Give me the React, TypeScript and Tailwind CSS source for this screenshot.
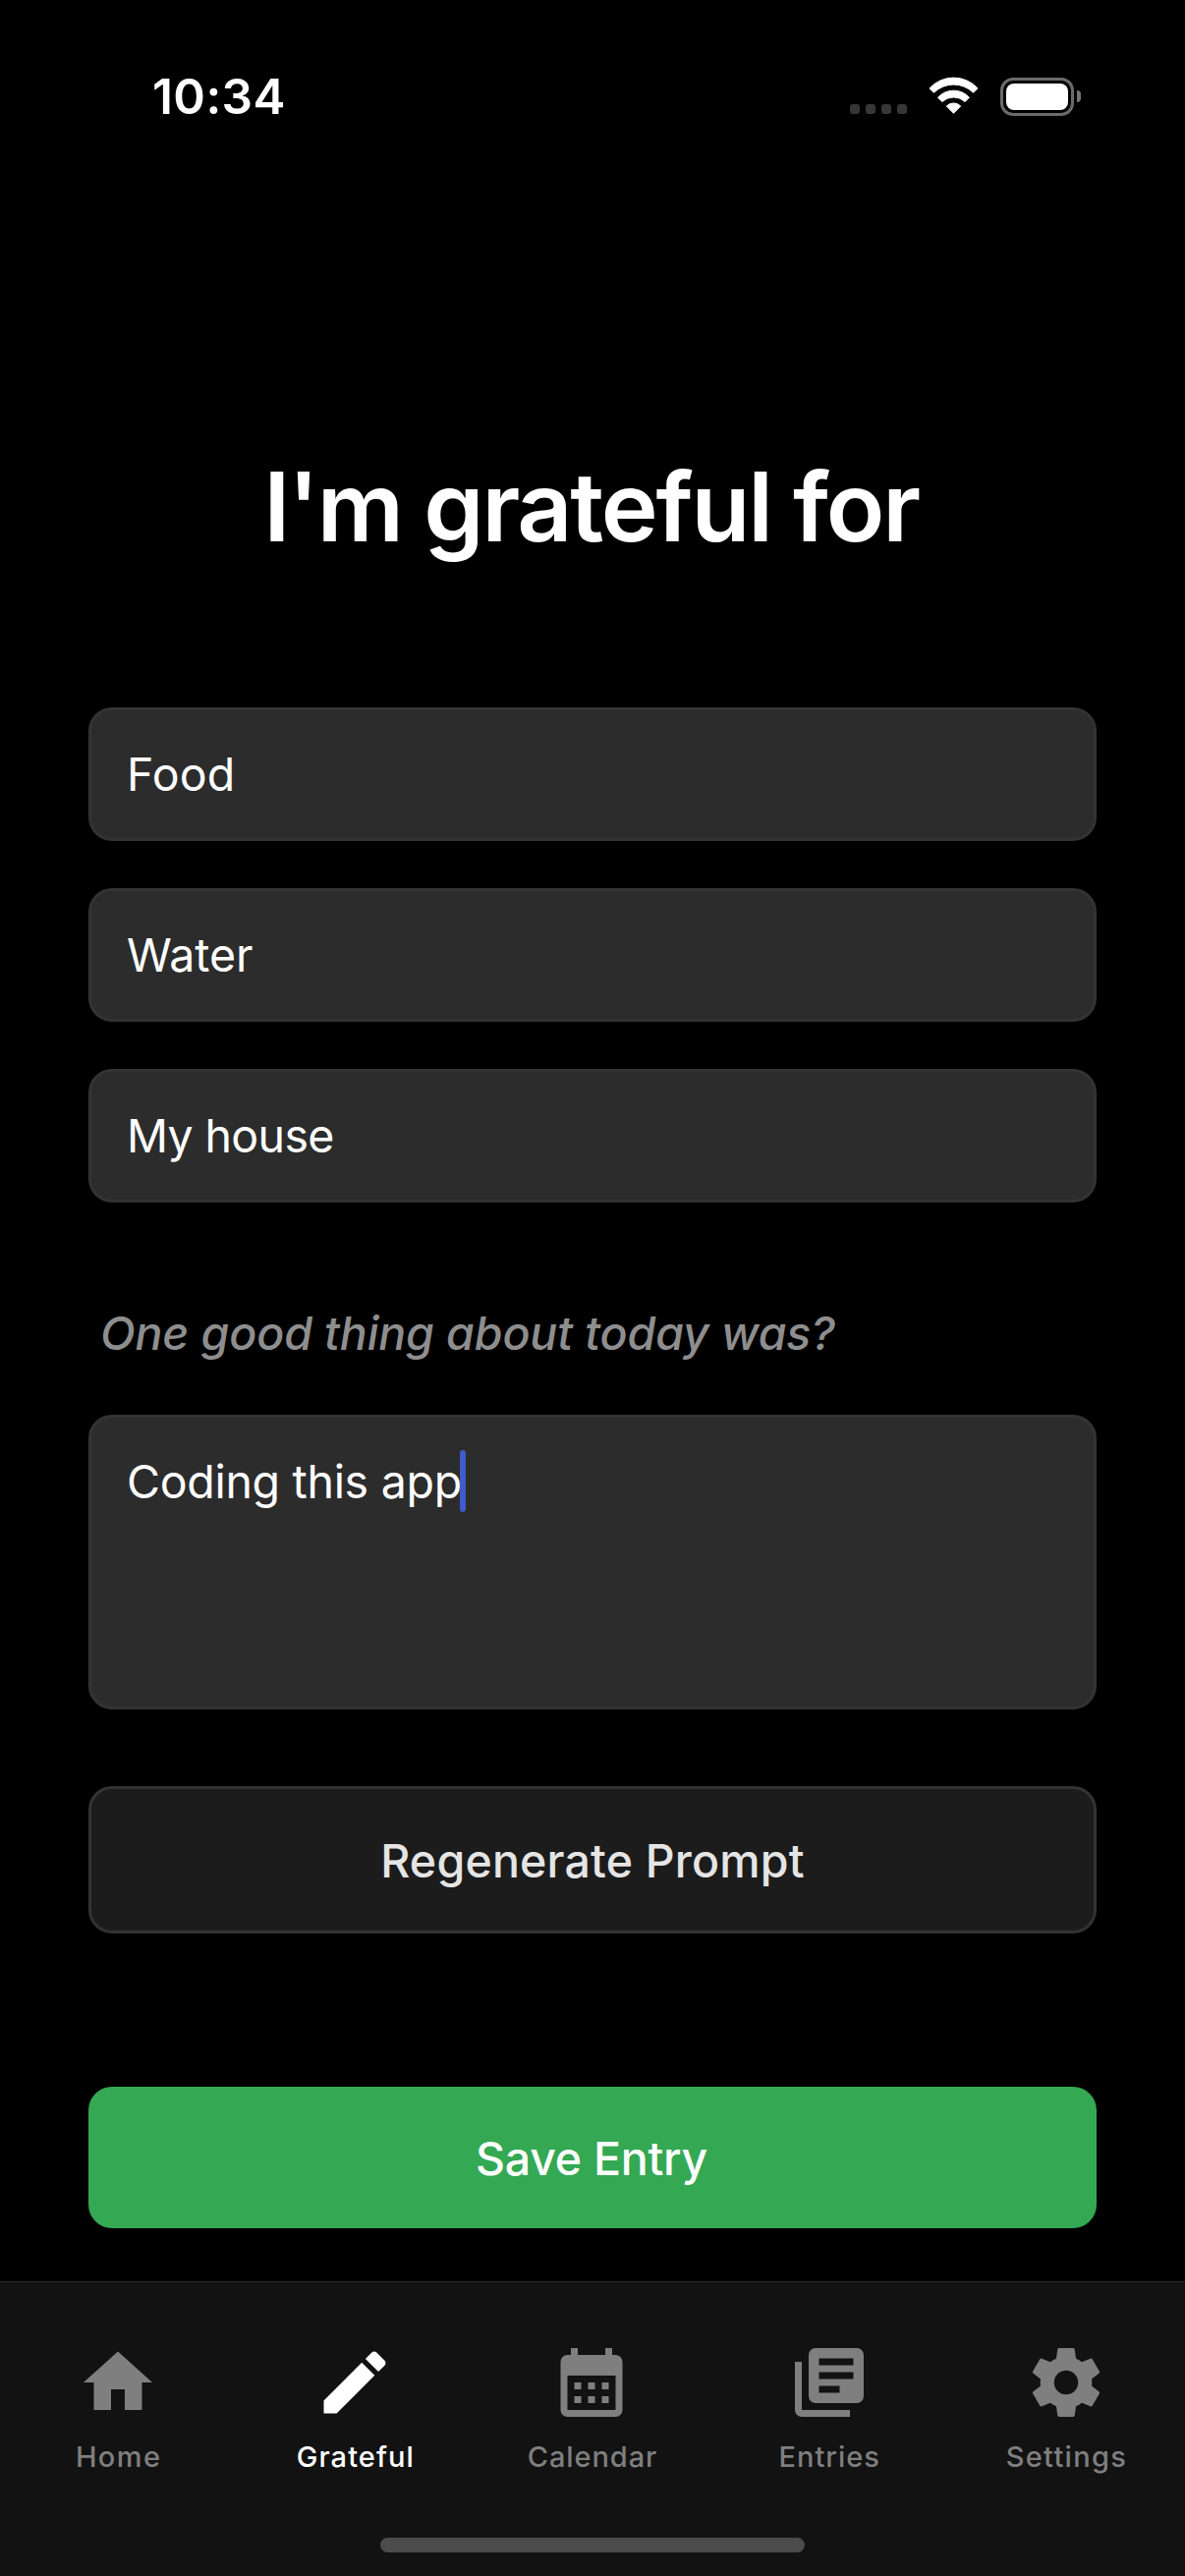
type Tab = { label: string; icon: string; spacing: string; active?: boolean };

const tabs: Tab[] = [
  {
    label: "Home",
    spacing: "tracking-[1.38px]",
    icon: "M10,20V14H14V20H19V12H22L12,3L2,12H5V20H10Z",
  },
  {
    label: "Grateful",
    spacing: "tracking-[1.06px]",
    active: true,
    icon: "M20.71,7.04C21.1,6.65 21.1,6 20.71,5.63L18.37,3.29C18,2.9 17.35,2.9 16.96,3.29L15.12,5.12L18.87,8.87M3,17.25V21H6.75L17.81,9.93L14.06,6.18L3,17.25Z",
  },
  {
    label: "Calendar",
    spacing: "tracking-[0.91px]",
    icon: "M9,12V14H7V12H9M13,12V14H11V12H13M17,12V14H15V12H17M9,16V18H7V16H9M13,16V18H11V16H13M17,16V18H15V16H17M19,4A2,2 0 0,1 21,6V20A2,2 0 0,1 19,22H5A2,2 0 0,1 3,20V6A2,2 0 0,1 5,4H6V2H8V4H16V2H18V4H19M19,20V10H5V20H19Z",
  },
  {
    label: "Entries",
    spacing: "tracking-[1px]",
    icon: "M19,7H9V5H19M15,15H9V13H15M19,11H9V9H19M20,2H8A2,2 0 0,0 6,4V16A2,2 0 0,0 8,18H20A2,2 0 0,0 22,16V4A2,2 0 0,0 20,2M4,6H2V20A2,2 0 0,0 4,22H18V20H4V6Z",
  },
  {
    label: "Settings",
    spacing: "tracking-[1.31px]",
    icon: "M12,15.5A3.5,3.5 0 0,1 8.5,12A3.5,3.5 0 0,1 12,8.5A3.5,3.5 0 0,1 15.5,12A3.5,3.5 0 0,1 12,15.5M19.43,12.97C19.47,12.65 19.5,12.33 19.5,12C19.5,11.67 19.47,11.34 19.43,11L21.54,9.37C21.73,9.22 21.78,8.95 21.66,8.73L19.66,5.27C19.54,5.05 19.27,4.96 19.05,5.05L16.56,6.05C16.04,5.66 15.5,5.32 14.87,5.07L14.5,2.42C14.46,2.18 14.25,2 14,2H10C9.75,2 9.54,2.18 9.5,2.42L9.13,5.07C8.5,5.32 7.96,5.66 7.44,6.05L4.95,5.05C4.73,4.96 4.46,5.05 4.34,5.27L2.34,8.73C2.21,8.95 2.27,9.22 2.46,9.37L4.57,11C4.53,11.34 4.5,11.67 4.5,12C4.5,12.33 4.53,12.65 4.57,12.97L2.46,14.63C2.27,14.78 2.21,15.05 2.34,15.27L4.34,18.73C4.46,18.95 4.73,19.03 4.95,18.95L7.44,17.94C7.96,18.34 8.5,18.68 9.13,18.93L9.5,21.58C9.54,21.82 9.75,22 10,22H14C14.25,22 14.46,21.82 14.5,21.58L14.87,18.93C15.5,18.67 16.04,18.34 16.56,17.94L19.05,18.95C19.27,19.03 19.54,18.95 19.66,18.73L21.66,15.27C21.78,15.05 21.73,14.78 21.54,14.63L19.43,12.97Z",
  },
];

const fields = [
  { value: "Food", spacing: "tracking-[0.1px]" },
  { value: "Water", spacing: "tracking-[-0.1px]" },
  { value: "My house", spacing: "tracking-[-0.65px]" },
];

function StatusBar() {
  return (
    <header className="flex h-[196px] shrink-0 items-center justify-between pr-[106px] pl-[155px]">
      <span className="text-[49.5px] leading-[60px] font-semibold tracking-[0.4px]">10:34</span>
      <div className="flex items-center">
        <div className="mt-[26px] flex gap-1.5">
          <span className="size-2.5 rounded-[3px] bg-[#363636]" />
          <span className="size-2.5 rounded-[3px] bg-[#363636]" />
          <span className="size-2.5 rounded-[3px] bg-[#363636]" />
          <span className="size-2.5 rounded-[3px] bg-[#363636]" />
        </div>
        <svg
          className="ml-[22px] h-10 w-[51px]"
          viewBox="0 0 51 40"
          fill="white"
          stroke="white"
          strokeWidth="1"
          strokeLinejoin="round"
        >
          <path d="M0.9 12A33.2 33.2 0 0 1 50.1 12L45.4 16.2A28.5 28.5 0 0 0 5.6 16.2Z" />
          <path d="M9.5 21.3A21.5 21.5 0 0 1 41.5 21.3L37 25.5A16.9 16.9 0 0 0 14 25.5Z" />
          <path d="M18.3 30A10 10 0 0 1 32.7 30L25.5 37.3Z" />
        </svg>
        <div className="ml-[22px] flex items-center">
          <div className="h-[39px] w-[75px] rounded-[13px] border-3 border-[#6b6b6b] p-[3px]">
            <div className="h-full w-full rounded-[8px] bg-white" />
          </div>
          <div className="ml-[3px] h-3 w-1 rounded-r-full bg-[#757575]" />
        </div>
      </div>
    </header>
  );
}

function TabBar() {
  return (
    <nav className="flex h-[300px] shrink-0 flex-col border-t border-[#292929] bg-[#121212]">
      <div className="grid grid-cols-5">
        {tabs.map((tab) => (
          <div
            key={tab.label}
            className={
              "flex flex-col items-center pt-[60px] " + (tab.active ? "text-white" : "text-[#7f7f7f]")
            }
          >
            <div className="pr-[1.2px]">
              <svg className="size-[84px]" viewBox="0 0 24 24" fill="currentColor">
                <path d={tab.icon} />
              </svg>
            </div>
            <span className={"mt-[15px] text-[29px] leading-[37px] font-medium " + tab.spacing}>
              {tab.label}
            </span>
          </div>
        ))}
      </div>
      <div className="mt-auto mb-6 h-[15px] w-[432px] self-center rounded-full bg-[#4c4c4c]" />
    </nav>
  );
}

export default function App() {
  return (
    <div className="flex h-[2622px] w-[1206px] flex-col overflow-hidden bg-black font-['Inter',sans-serif] text-white">
      <StatusBar />
      <main className="flex flex-1 flex-col px-[90px] pt-[260px]">
        <h1 className="pr-[3px] text-center text-[98px] leading-[120px] font-semibold tracking-[-2.2px] whitespace-nowrap">
          I'm grateful for
        </h1>
        <div className="mt-36 flex flex-col gap-12">
          {fields.map((field) => (
            <div
              key={field.value}
              className="flex h-[136px] items-center rounded-3xl border-3 border-[#333333] bg-[#2c2c2c] px-9"
            >
              <span className={"text-[46.5px] leading-[58px] " + field.spacing}>{field.value}</span>
            </div>
          ))}
        </div>
        <p className="mt-[104px] pl-3 text-[46.5px] leading-[58px] font-medium tracking-[-0.13px] text-[#8e8e8e] italic">
          One good thing about today was?
        </p>
        <div className="mt-[54px] flex h-[300px] items-start rounded-3xl border-3 border-[#333333] bg-[#2c2c2c] px-9 pt-[33px]">
          <span className="mt-px text-[46.5px] leading-[63px] tracking-[-0.3px]">Coding this app</span>
          <span className="-ml-0.5 h-[63px] w-1.5 rounded-full bg-[#3e5ccc]" />
        </div>
        <button className="mt-[78px] h-[150px] rounded-3xl border-3 border-[#333333] bg-[#1c1c1c] pt-1 text-[46.5px] font-medium tracking-[0.19px] text-[#e5e5e5]">
          Regenerate Prompt
        </button>
        <button className="mt-[156px] h-36 rounded-3xl bg-[#34a853] pt-1 pr-0.5 text-[46.5px] font-medium tracking-[-0.26px]">
          Save Entry
        </button>
      </main>
      <TabBar />
    </div>
  );
}
